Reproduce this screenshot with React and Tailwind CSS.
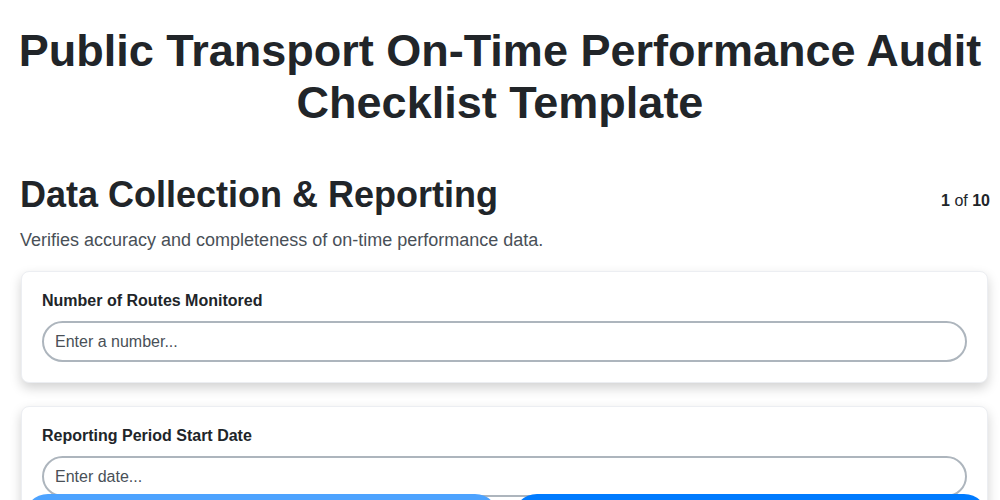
import React from 'react'

const FIELDS = [
  { label: 'Number of Routes Monitored', placeholder: 'Enter a number...', type: 'number' },
  { label: 'Reporting Period Start Date', placeholder: 'Enter date...', type: 'text' },
]

export default function App() {
  return (
    <div className="min-h-screen bg-white text-[#212529] font-['Liberation_Sans',Arial,sans-serif] pb-24">
      <h1 className="text-center text-[45px] leading-[52px] font-bold px-4 pt-[25px]">
        Public Transport On-Time Performance Audit Checklist Template
      </h1>

      <div className="pl-[20px] pr-[10px] mt-[44px]">
        <div className="flex items-start justify-between">
          <h2 className="text-[36px] leading-[44px] font-semibold">Data Collection &amp; Reporting</h2>
          <div className="text-[16px] mt-[16px]">
            <span className="font-bold">1</span> of <span className="font-bold">10</span>
          </div>
        </div>
        <p className="text-[18px] text-[#495057] mt-[10px]">
          Verifies accuracy and completeness of on-time performance data.
        </p>
      </div>

      <div className="ml-[21px] mr-[12px] mt-[17px] flex flex-col gap-[23px]">
        {FIELDS.map((f) => (
          <div
            key={f.label}
            className="bg-white rounded-[8px] border border-[#eceef2] shadow-[0_5px_12px_rgba(0,0,0,0.18)] px-[20px] pt-[19px] pb-[20px]"
          >
            <label className="block text-[16px] font-bold leading-[20px] mb-[10px]">{f.label}</label>
            <input
              type={f.type}
              placeholder={f.placeholder}
              className="w-full h-[41px] rounded-full border-2 border-[#adb5bd] px-[11px] text-[16px] placeholder:text-[#495057] outline-none"
            />
          </div>
        ))}
      </div>

      {/* Bottom nav */}
      <div className="fixed left-0 right-0 top-[494px] flex gap-[14px] pl-[24px] pr-[12px]">
        <button className="flex-1 h-[50px] rounded-[24px] bg-[#4da3ff] text-white font-bold text-[16px] pt-[20px]">
          Previous
        </button>
        <button className="flex-1 h-[50px] rounded-[24px] bg-[#007bff] text-white font-bold text-[16px] pt-[20px]">
          Next
        </button>
      </div>
    </div>
  )
}
